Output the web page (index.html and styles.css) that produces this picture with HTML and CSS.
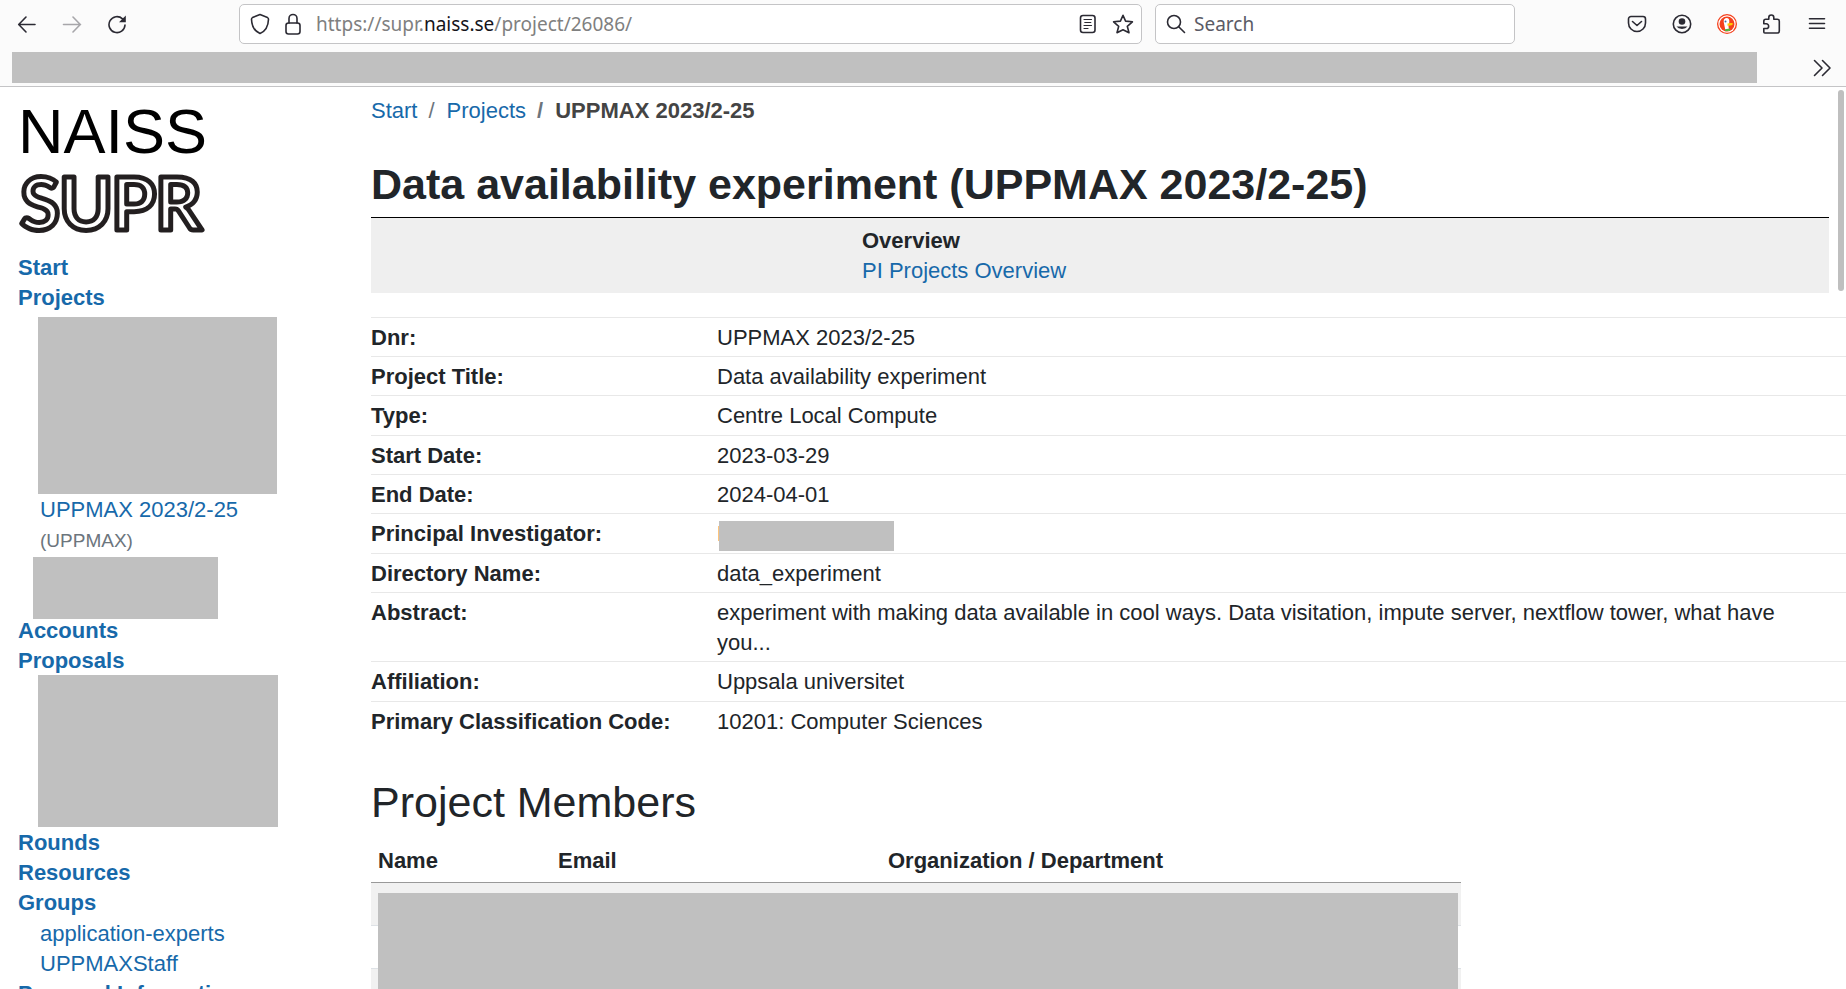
FILE: index.html
```html
<!DOCTYPE html>
<html lang="en">
<head>
<meta charset="utf-8">
<title>UPPMAX 2023/2-25 | NAISS SUPR</title>
<link rel="stylesheet" href="styles.css">
</head>
<body>
<header class="chrome">
  <div class="toolbar">
    <div class="nav-buttons">
      <button class="icon-button" aria-label="Back"><svg width="20" height="20" viewBox="0 0 20 20"><path d="M18 10.500H2M9 3 1.700 10.500 9 18"/></svg></button>
      <button class="icon-button faded" aria-label="Forward"><svg width="20" height="20" viewBox="0 0 20 20"><path d="M1.500 10.500h17M11 3l7.300 7.500L11 18"/></svg></button>
      <button class="icon-button" aria-label="Reload"><svg width="20" height="20" viewBox="0 0 20 20"><path d="M15.500 4.800A8 8 0 1 0 18 11"/><path class="solid" d="M18.800 1.500v6.800H12z"/></svg></button>
    </div>
    <div class="field address">
      <svg width="20" height="22" viewBox="0 0 20 22"><path d="M10 1.500 17.500 4.600c.8.400 1 .8 1 1.600C18.300 12.500 15.800 18 10 20.500 4.200 18 1.700 12.500 1.500 6.200c0-.8.2-1.200 1-1.600z"/></svg>
      <svg width="16" height="22" viewBox="0 0 16 22"><rect x="1" y="10" width="14" height="11" rx="2.500"/><path d="M4 10V5.500a4 4 0 0 1 8 0V10"/></svg>
      <span class="url">https://supr.<b>naiss.se</b>/project/26086/</span>
      <button class="icon-button" aria-label="Reader view"><svg width="18" height="20" viewBox="0 0 18 20"><rect x="1.500" y="1.500" width="14.500" height="17" rx="2.500"/><path class="thin" d="M5 5.500h7.500M5.800 8.500h6M5 11.500h7.500M5 14.500h4"/></svg></button>
      <button class="icon-button" aria-label="Bookmark"><svg width="22" height="20" viewBox="0 0 22 20"><path d="M11 1.300l2.600 5.800 6.800.7-5.100 4.500 1.700 6.400L11 15.700l-6 3 1.700-6.400L1.600 7.800l6.800-.7z"/></svg></button>
    </div>
    <label class="field search">
      <svg width="20" height="20" viewBox="0 0 20 20"><circle cx="8" cy="8" r="6.500"/><path d="M12.700 12.700 18.500 18.500"/></svg>
      <input type="text" placeholder="Search" aria-label="Search">
    </label>
    <div class="tools">
      <button class="icon-button" aria-label="Pocket"><svg width="20" height="20" viewBox="0 0 20 20"><path d="M4 2.500h12a2.500 2.500 0 0 1 2.500 2.500v4a8.500 8.500 0 0 1-17 0V5A2.500 2.500 0 0 1 4 2.500zM5.500 7.500 10 11.500l4.500-4"/></svg></button>
      <button class="icon-button" aria-label="Account"><svg width="20" height="20" viewBox="0 0 20 20"><circle cx="10" cy="10" r="8.700"/><circle class="solid" cx="10" cy="7.500" r="3.300"/><path class="solid" d="M4.500 12.500h11a6 4 0 0 1-11 0z"/></svg></button>
      <button class="icon-button" aria-label="DuckDuckGo"><svg class="duck" width="20" height="20" viewBox="0 0 20 20"><circle cx="10" cy="10" r="10" fill="#f4401c"/><circle cx="10" cy="10" r="8.700" fill="#fff"/><circle cx="10" cy="10" r="7.500" fill="#f4401c"/><path d="M8.500 16.800 6.700 8C6.500 5 8 4 9.500 4c2.300 0 3 1.500 2.800 4l-.8 4 .5 4.800z" fill="#fff"/><path d="M10.500 9.500c2-.8 5.500-.8 5.500.3s-2.500 2.200-5.500 2z" fill="#fc0"/><path d="M8 15.200l5-.8v2.400l-5 .4z" fill="#4cba3c"/><circle cx="8.500" cy="7.500" r="1" fill="#3a6ea5"/></svg></button>
      <button class="icon-button" aria-label="Extensions"><svg width="20" height="20" viewBox="0 0 20 20"><path d="M2.800 19h12.500c1.300 0 2-.7 2-2V7.300c0-1.300-.7-2-2-2h-3.500V3.500a2.500 2.500 0 0 0-5 0v1.800H3.800c-1.200 0-2 .7-2 2v2.500h2.500a2.300 2.300 0 0 1 0 4.700H1.800V18c0 .7.400 1 1 1z"/></svg></button>
      <button class="icon-button" aria-label="Menu"><svg width="20" height="20" viewBox="0 0 20 20"><path d="M2.500 4.700h15M2.500 9.500h15M2.500 14.300h15"/></svg></button>
    </div>
  </div>
  <div class="bookmarks">
    <div class="redacted bookmark-strip"></div>
    <button class="icon-button" aria-label="More bookmarks"><svg width="20" height="20" viewBox="0 0 20 20"><path d="M2.500 2.500 10 10l-7.500 7.500M10.500 2.500 18 10l-7.500 7.500"/></svg></button>
  </div>
</header>

<div class="page">
  <aside class="sidebar">
    <div class="brand">NAISS</div>
    <svg class="logo" width="188" height="60" viewBox="0 0 188 60" role="img" aria-label="SUPR"><text x="1 40 92 136" y="55">SUPR</text></svg>
    <ul class="menu">
      <li><a href="#">Start</a></li>
      <li><a href="#">Projects</a>
        <div class="redacted projects-block"></div>
        <ul class="submenu">
          <li><a href="#">UPPMAX 2023/2-25</a> <small>(UPPMAX)</small></li>
        </ul>
        <div class="redacted centre-block"></div>
      </li>
      <li><a href="#">Accounts</a></li>
      <li><a href="#">Proposals</a>
        <div class="redacted proposals-block"></div>
      </li>
      <li><a href="#">Rounds</a></li>
      <li><a href="#">Resources</a></li>
      <li><a href="#">Groups</a>
        <ul class="submenu">
          <li><a href="#">application-experts</a></li>
          <li><a href="#">UPPMAXStaff</a></li>
        </ul>
      </li>
      <li><a href="#">Personal Information</a></li>
    </ul>
  </aside>

  <main class="content">
    <nav aria-label="Breadcrumb">
      <ol class="breadcrumb">
        <li><a href="#">Start</a></li>
        <li><a href="#">Projects</a></li>
        <li class="current">UPPMAX 2023/2-25</li>
      </ol>
    </nav>
    <h1>Data availability experiment (UPPMAX 2023/2-25)</h1>
    <div class="overview">
      <div class="overview-links">
        <strong>Overview</strong>
        <a href="#">PI Projects Overview</a>
      </div>
    </div>

    <table class="details">
      <tr><th scope="row">Dnr:</th><td>UPPMAX 2023/2-25</td></tr>
      <tr><th scope="row">Project Title:</th><td>Data availability experiment</td></tr>
      <tr><th scope="row">Type:</th><td>Centre Local Compute</td></tr>
      <tr><th scope="row">Start Date:</th><td>2023-03-29</td></tr>
      <tr><th scope="row">End Date:</th><td>2024-04-01</td></tr>
      <tr><th scope="row">Principal Investigator:</th><td><div class="redacted person"></div></td></tr>
      <tr><th scope="row">Directory Name:</th><td>data_experiment</td></tr>
      <tr><th scope="row">Abstract:</th><td>experiment with making data available in cool ways. Data visitation, impute server, nextflow tower, what have you...</td></tr>
      <tr><th scope="row">Affiliation:</th><td>Uppsala universitet</td></tr>
      <tr><th scope="row">Primary Classification Code:</th><td>10201: Computer Sciences</td></tr>
    </table>

    <h2>Project Members</h2>
    <div class="members-wrap">
      <table class="members">
        <thead><tr><th class="name">Name</th><th class="email">Email</th><th>Organization / Department</th></tr></thead>
        <tbody>
          <tr><td></td><td></td><td></td></tr>
          <tr><td></td><td></td><td></td></tr>
          <tr><td></td><td></td><td></td></tr>
        </tbody>
      </table>
      <div class="redacted members-cover"></div>
    </div>
  </main>
  <div class="scroll-thumb"></div>
</div>
</body>
</html>
```

FILE: styles.css
```css
* { box-sizing: border-box; }

body {
  display: flex;
  flex-direction: column;
  height: 100vh;
  margin: 0;
  overflow: hidden;
  background: #fff;
  color: #212529;
  font: 22px/30px "Liberation Sans", Arial, sans-serif;
}

a { color: #1769aa; text-decoration: none; }
ul, ol { list-style: none; margin: 0; padding: 0; }
svg { display: block; flex: none; }
.redacted { background: #c0c0c0; }

/* Browser toolbar */
.chrome {
  flex: none;
  background: #fbfbfb;
  border-bottom: 1px solid #c4c4c6;
  font-family: "Noto Sans", sans-serif;
}
.chrome svg { fill: none; stroke: #2b2a33; stroke-width: 1.6; stroke-linecap: round; stroke-linejoin: round; }
.chrome svg .thin { stroke-width: 1.2; }
.chrome svg .solid { fill: #2b2a33; stroke: none; }
.chrome svg.duck { stroke: none; }
.icon-button { padding: 0; border: 0; background: none; }
.faded { opacity: 0.4; }

.toolbar {
  display: grid;
  grid-template-columns: 221px minmax(0, 903fr) minmax(0, 360fr) 299px;
  column-gap: 13px;
  align-items: center;
  padding: 4px 19px 8px 5px;
}
.nav-buttons { display: flex; gap: 25px; padding-left: 12px; }
.field {
  display: flex;
  align-items: center;
  height: 40px;
  padding: 0 10px;
  background: #fff;
  border: 1px solid #c4c4c6;
  border-radius: 5px;
}
.address { gap: 15px; padding: 0 7px 0 10px; }
.url { flex: 1; color: #808080; font-size: 19px; line-height: 24px; white-space: nowrap; }
.url b { color: #15141a; font-weight: 400; }
.search { gap: 8px; }
.search input {
  flex: 1;
  min-width: 0;
  padding: 0;
  border: 0;
  outline: 0;
  background: none;
  color: #5b5b66;
  font: 19px/24px "Noto Sans", sans-serif;
}
.search input::placeholder { color: #5b5b66; opacity: 1; }
.tools { display: flex; justify-content: flex-end; gap: 25px; }

.bookmarks {
  display: flex;
  align-items: center;
  justify-content: space-between;
  gap: 55px;
  padding: 0 14px 3px 12px;
}
.bookmark-strip { flex: 1; height: 31px; }

/* Page */
.page {
  position: relative;
  flex: 1;
  display: grid;
  grid-template-columns: 371px minmax(0, 1fr);
  min-height: 0;
  overflow: hidden;
}
.scroll-thumb {
  position: absolute;
  top: 3px;
  right: 2px;
  width: 6px;
  height: 201px;
  border-radius: 3px;
  background: #bfbfbf;
}

/* Sidebar */
.sidebar { padding: 9px 0 0 18px; }
.brand { color: #000; font-size: 63px; line-height: 70px; }
.logo { margin: 9px 0 0 1px; overflow: visible; }
.logo text {
  font: 700 73px Lato, sans-serif;
  fill: #fff;
  stroke: #231f20;
  stroke-width: 5;
  stroke-linejoin: round;
}
.menu { margin-top: 18px; font-weight: 700; }
.menu a { display: block; }
.submenu { padding: 1px 0 0 22px; font-weight: 400; }
.submenu small { display: block; padding-top: 1px; color: #6c757d; font-size: 19px; }
.projects-block { width: 239px; height: 177px; margin: 4px 0 0 20px; }
.centre-block { width: 185px; height: 62px; margin: 1px 0 -3px 15px; }
.proposals-block { width: 240px; height: 152px; margin: -1px 0 1px 20px; }

/* Content */
.content { padding-top: 9px; }
.breadcrumb { display: flex; }
.breadcrumb li + li::before { content: "/"; padding: 0 12px 0 11px; color: #6c757d; }
.breadcrumb .current { color: #444; font-weight: 700; }

h1, h2 { margin: 0; font-size: 43px; line-height: 52px; }
h1 { margin-right: 17px; padding: 32px 0 7px; border-bottom: 1px solid #000; }
h2 { margin-top: 36px; font-weight: 400; }

.overview { display: flex; justify-content: center; margin-right: 17px; padding: 8px 0 7px; background: #efefef; }
.overview-links { display: flex; flex-direction: column; width: 476px; }

table { border-collapse: separate; border-spacing: 0; }
th { text-align: left; }
.details { width: 100%; margin-top: 24px; }
.details th, .details td { padding: 5px 0 3px; border-top: 1px solid #e8e8e8; vertical-align: top; }
.details tr:nth-child(3n) > * { padding-bottom: 4px; }
.details th { width: 346px; }
.details td { padding-right: 60px; }
.person { position: relative; width: 175px; height: 30px; margin: 2px 0 -2px 2px; }
.person::before { content: ""; position: absolute; top: 5px; left: -1px; width: 1px; height: 15px; background: #fdc47c; }

.members-wrap { position: relative; max-width: 1090px; margin-top: 10px; }
.members { width: 100%; table-layout: fixed; }
.members th { padding: 8px 7px 6px; border-bottom: 1px solid #999; }
.members .name { width: 180px; }
.members .email { width: 330px; }
.members td { height: 43px; border-bottom: 1px solid #dee2e6; }
.members tbody tr:nth-child(odd) { background: #f1f1f1; }
.members-cover { position: absolute; inset: 55px 3px 0 7px; }
```
